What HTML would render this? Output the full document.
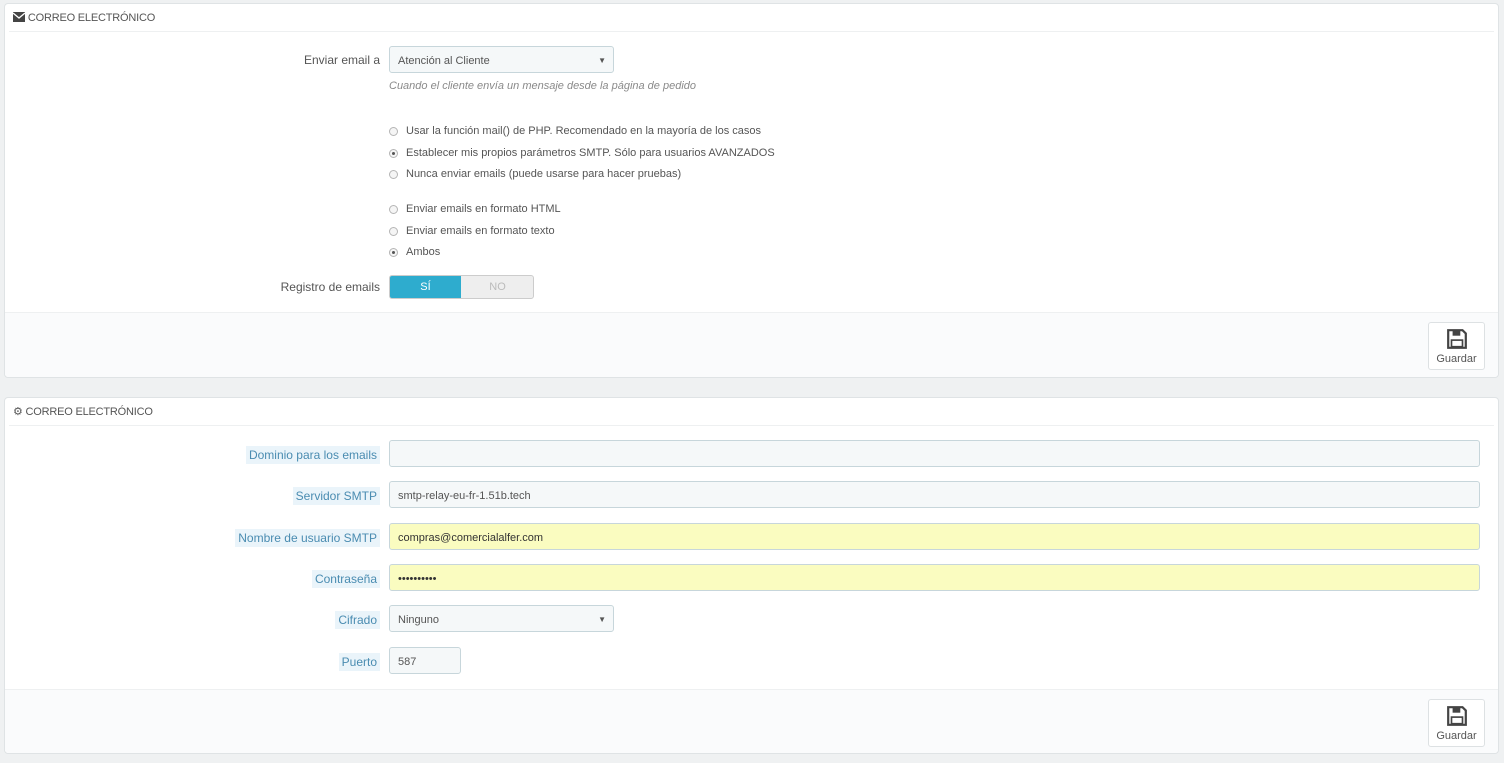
<!DOCTYPE html><html><head><meta charset="utf-8"><style>
body{margin:0;background:#eff1f2;font-family:"Liberation Sans",sans-serif;font-size:12px;color:#555;width:1504px;height:763px;position:relative;overflow:hidden}
.a{position:absolute}
.panel{position:absolute;left:4px;width:1493px;background:#fff;border:1px solid #dfe3e5;border-radius:4px}
.hd{position:absolute;left:4px;right:4px;top:0;height:27px;border-bottom:1px solid #eef0f1;font-size:11px;color:#555;line-height:28px;padding-left:4px;letter-spacing:-0.2px}
.ft{position:absolute;left:0;right:0;bottom:0;background:#fafbfc;border-top:1px solid #eef0f1;border-radius:0 0 4px 4px}
.btn{position:absolute;right:13px;width:57px;height:48px;background:#fff;border:1px solid #dde1e3;border-radius:3px;text-align:center;font-size:11px;color:#555;box-sizing:border-box}
.lbl{position:absolute;right:1124px;text-align:right;font-size:12px;color:#555}
.lb2{position:absolute;right:1124px;background:#eaf4fa;color:#4a8cb1;padding:1px 3px;font-size:12px;line-height:16px}
.inp{position:absolute;left:389px;height:27px;background:#f5f8f9;border:1px solid #c7d6db;border-radius:3px;box-sizing:border-box;padding-left:8px;line-height:28px;font-size:11px;color:#555}
.y{background:#fafcc0}
.r{position:absolute;left:389px;font-size:11px;color:#555;line-height:12px}
.r i{display:inline-block;width:9px;height:9px;border:1px solid #b5b5b5;border-radius:50%;background:#f5f5f5;vertical-align:-2px;margin-right:8px;box-sizing:border-box;position:relative}
.r i.on:after{content:"";position:absolute;left:2px;top:2px;width:3px;height:3px;border-radius:50%;background:#555}
.car{position:absolute;right:7px;top:0;font-size:8px}
</style></head><body>
<div class="panel" style="top:3px;height:373px">
 <div class="hd"><svg width="12" height="10" viewBox="0 0 12 10" style="vertical-align:-1px"><rect x="0" y="0" width="12" height="10" fill="#444"/><path d="M0 1 L6 6 L12 1" stroke="#fff" stroke-width="1.3" fill="none"/></svg> CORREO ELECTRÓNICO</div>
 <div class="ft" style="height:64px"><div class="btn" style="top:9px"><svg width="22" height="22" viewBox="0 0 20 20" style="margin-top:5px"><path d="M2 2h13l3 3v13H2z" fill="none" stroke="#444" stroke-width="2"/><rect x="6" y="2" width="7" height="5" fill="#444"/><rect x="5" y="11" width="10" height="6" fill="none" stroke="#444" stroke-width="1.5"/></svg><br>Guardar</div></div>
</div>
<div class="lbl" style="top:53px">Enviar email a</div>
<div class="inp" style="top:46px;width:225px">Atención al Cliente<span class="car">▼</span></div>
<div class="a" style="left:389px;top:80px;font-size:11px;font-style:italic;color:#8a8a8a">Cuando el cliente envía un mensaje desde la página de pedido</div>
<div class="r" style="top:125px"><i></i>Usar la función mail() de PHP. Recomendado en la mayoría de los casos</div>
<div class="r" style="top:147px"><i class="on"></i>Establecer mis propios parámetros SMTP. Sólo para usuarios AVANZADOS</div>
<div class="r" style="top:168px"><i></i>Nunca enviar emails (puede usarse para hacer pruebas)</div>
<div class="r" style="top:203px"><i></i>Enviar emails en formato HTML</div>
<div class="r" style="top:225px"><i></i>Enviar emails en formato texto</div>
<div class="r" style="top:246px"><i class="on"></i>Ambos</div>
<div class="lbl" style="top:280px">Registro de emails</div>
<div class="a" style="left:389px;top:275px;width:143px;height:22px;border:1px solid #ccc;border-radius:3px;background:#eee;overflow:hidden">
 <div class="a" style="left:0;top:0;width:71px;height:22px;background:#2eacce;color:#fff;text-align:center;line-height:22px;font-size:11px">SÍ</div>
 <div class="a" style="left:72px;top:0;width:71px;height:22px;color:#bbb;text-align:center;line-height:22px;font-size:11px">NO</div>
</div>

<div class="panel" style="top:397px;height:355px">
 <div class="hd"><span style="font-size:11px">⚙</span> CORREO ELECTRÓNICO</div>
 <div class="ft" style="height:63px"><div class="btn" style="top:9px"><svg width="22" height="22" viewBox="0 0 20 20" style="margin-top:5px"><path d="M2 2h13l3 3v13H2z" fill="none" stroke="#444" stroke-width="2"/><rect x="6" y="2" width="7" height="5" fill="#444"/><rect x="5" y="11" width="10" height="6" fill="none" stroke="#444" stroke-width="1.5"/></svg><br>Guardar</div></div>
</div>
<div class="lb2" style="top:446px">Dominio para los emails</div>
<div class="inp" style="top:440px;width:1091px"></div>
<div class="lb2" style="top:487px">Servidor SMTP</div>
<div class="inp" style="top:481px;width:1091px">smtp-relay-eu-fr-1.51b.tech</div>
<div class="lb2" style="top:529px">Nombre de usuario SMTP</div>
<div class="inp y" style="top:523px;width:1091px;color:#333">compras@comercialalfer.com</div>
<div class="lb2" style="top:570px">Contraseña</div>
<div class="inp y" style="top:564px;width:1091px;color:#333">••••••••••</div>
<div class="lb2" style="top:611px">Cifrado</div>
<div class="inp" style="top:605px;width:225px">Ninguno<span class="car">▼</span></div>
<div class="lb2" style="top:653px">Puerto</div>
<div class="inp" style="top:647px;width:72px">587</div>
</body></html>
